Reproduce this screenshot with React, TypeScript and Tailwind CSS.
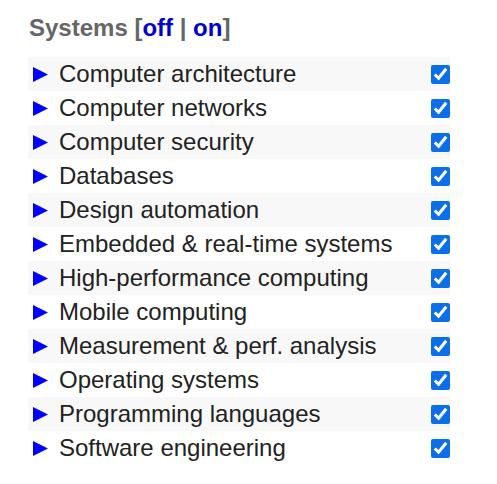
import React from "react";

const topics = [
  "Computer architecture",
  "Computer networks",
  "Computer security",
  "Databases",
  "Design automation",
  "Embedded & real-time systems",
  "High-performance computing",
  "Mobile computing",
  "Measurement & perf. analysis",
  "Operating systems",
  "Programming languages",
  "Software engineering",
];

export default function App() {
  const [checked, setChecked] = React.useState<boolean[]>(topics.map(() => true));

  const setAll = (v: boolean) => setChecked(topics.map(() => v));

  return (
    <div className="min-h-[484px] w-[497px] bg-white pl-[28px] pt-[14px] font-['Liberation_Sans',Arial,sans-serif]">
      <div className="pl-[1px] text-[24px] font-bold leading-[28px] text-[#666]">
        Systems [
        <a href="#" onClick={(e) => { e.preventDefault(); setAll(false); }} className="text-[#0000cc]">off</a>
        {" | "}
        <a href="#" onClick={(e) => { e.preventDefault(); setAll(true); }} className="text-[#0000cc]">on</a>
        ]
      </div>
      <ul className="mt-[15px] w-[422px]">
        {topics.map((t, i) => (
          <li
            key={t}
            className={`flex h-[34px] items-center justify-between ${i % 2 === 0 ? "bg-[#f8f8f8]" : "bg-white"}`}
          >
            <div className="flex items-center">
              <svg width="15" height="15" viewBox="0 0 15 15" className="ml-[5px] mr-[11px]">
                <polygon points="0,0 15,7.5 0,15" fill="#0000ff" />
              </svg>
              <span className="text-[24px] leading-[28px] text-[#222]">{t}</span>
            </div>
            <input
              type="checkbox"
              checked={checked[i]}
              onChange={() => setChecked((c) => c.map((v, j) => (j === i ? !v : v)))}
              className="m-0 h-[19px] w-[19px] accent-[#0b6fe8]"
            />
          </li>
        ))}
      </ul>
    </div>
  );
}
